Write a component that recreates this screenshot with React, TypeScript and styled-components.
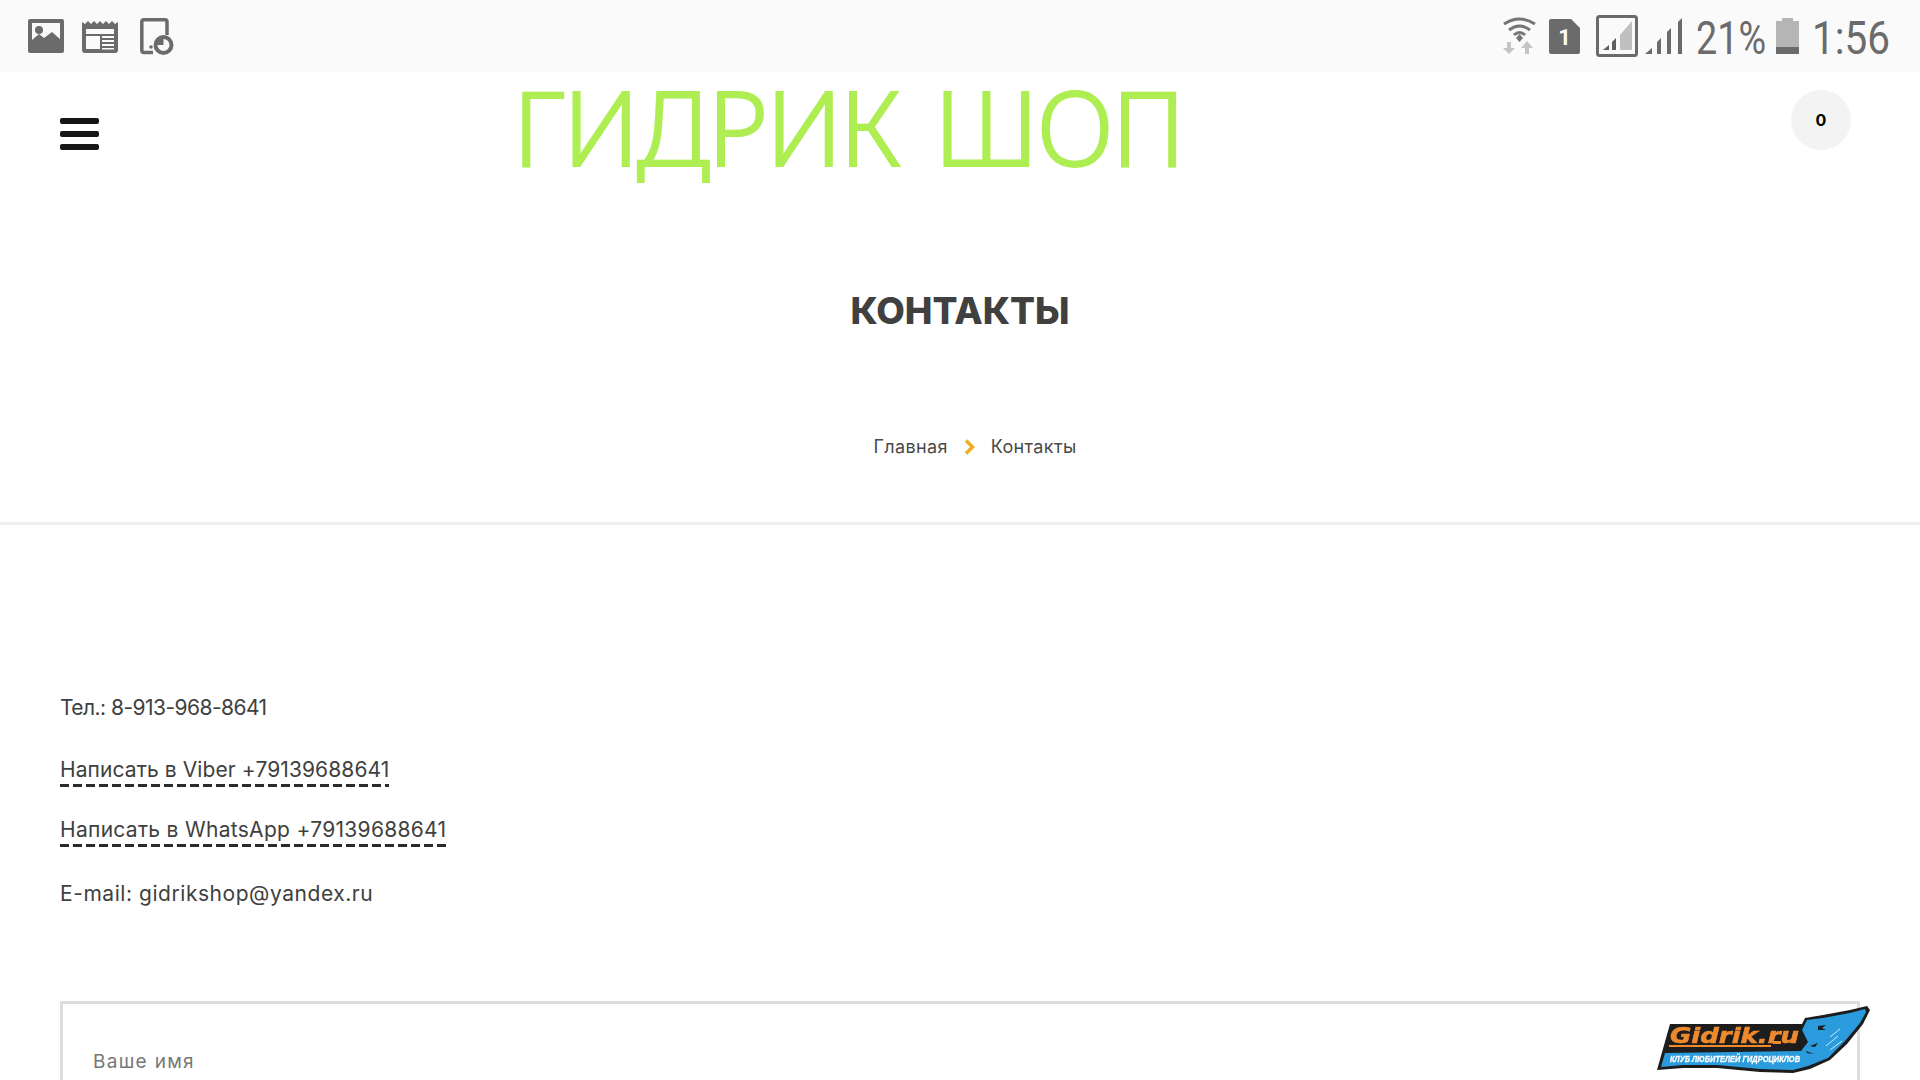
import React from 'react';
import styled, { createGlobalStyle } from 'styled-components';

const GlobalStyle = createGlobalStyle`
  html, body {
    margin: 0;
    padding: 0;
    background: #ffffff;
    overflow: hidden;
  }
  * {
    box-sizing: border-box;
  }
`;

const contacts = [
  { text: 'Тел.: 8-913-968-8641', top: 0, spacing: -0.55 },
  { text: 'Написать в Viber +79139688641', top: 32, spacing: 0.1, link: true },
  { text: 'Написать в WhatsApp +79139688641', top: 30, spacing: 0.3, link: true },
  { text: 'E-mail: gidrikshop@yandex.ru', top: 34, spacing: 0.55 }
];

const App: React.FC = () => {
  return (
    <Page>
      <GlobalStyle />
      <StatusBar>
        <StatusGroup>
          <ImageIcon />
          <NewsIcon />
          <TabletIcon />
        </StatusGroup>
        <StatusGroup>
          <WifiIcon />
          <SimIcon />
          <BoxSignalIcon />
          <SignalIcon />
          <BatteryText>21%</BatteryText>
          <BatteryIcon />
          <ClockText>1:56</ClockText>
        </StatusGroup>
      </StatusBar>

      <Header>
        <Burger>
          <BurgerBar />
          <BurgerBar />
          <BurgerBar />
        </Burger>
        <ShopLogo>ГИДРИК ШОП</ShopLogo>
        <CartBadge>0</CartBadge>
      </Header>

      <TitleBlock>
        <PageTitle>КОНТАКТЫ</PageTitle>
        <Breadcrumbs>
          <span>Главная</span>
          <Chevron />
          <span>Контакты</span>
        </Breadcrumbs>
      </TitleBlock>

      <Content>
        <div>
          {contacts.map(item => (
            <ContactRow key={item.text} $top={item.top} $spacing={item.spacing}>
              {item.link ? <ContactLink>{item.text}</ContactLink> : item.text}
            </ContactRow>
          ))}
        </div>
        <FormBox>
          <Placeholder>Ваше имя</Placeholder>
        </FormBox>
      </Content>

      <ClubLogo />
    </Page>
  );
};

export default App;

const ImageIcon = () => (
  <svg width="36" height="34" viewBox="0 0 36 34" style={{ marginLeft: 28 }}>
    <rect x="0" y="0" width="36" height="34" rx="2" fill="#6b6b6b" />
    <rect x="4" y="4" width="28" height="20" fill="#fafafa" />
    <circle cx="11" cy="11" r="4" fill="#6b6b6b" />
    <path d="M4 24 L4 21 L11 15 L16 19 L24 13 L32 20 L32 26 L4 26 Z" fill="#6b6b6b" />
  </svg>
);

const NewsIcon = () => (
  <svg width="36" height="33" viewBox="0 0 36 33" style={{ marginLeft: 18 }}>
    <path d="M0 2 L3 4 L6 1 L9 4 L12 1 L15 4 L18 1 L21 4 L24 1 L27 4 L30 1 L33 4 L36 2 L36 30 Q36 33 33 33 L3 33 Q0 33 0 30 Z" fill="#6b6b6b" />
    <rect x="4" y="9" width="28" height="5" fill="#fafafa" />
    <rect x="4" y="16" width="14" height="13" fill="#fafafa" />
    <rect x="20" y="16" width="12" height="2" fill="#fafafa" />
    <rect x="20" y="20" width="12" height="2" fill="#fafafa" />
    <rect x="20" y="24" width="12" height="2" fill="#fafafa" />
    <rect x="20" y="28" width="12" height="1.5" fill="#fafafa" />
  </svg>
);

const TabletIcon = () => (
  <svg width="34" height="37" viewBox="0 0 34 37" style={{ marginLeft: 22 }}>
    <path d="M13 34.500 H4 Q1.800 34.500 1.800 32 V4 Q1.800 1.800 4 1.800 H25 Q27 1.800 27 4 V17" fill="none" stroke="#6b6b6b" strokeWidth="3.500" />
    <circle cx="11" cy="29" r="1.800" fill="#6b6b6b" />
    <circle cx="23.500" cy="27" r="10" fill="#6b6b6b" />
    <path d="M23.500 27 V21 A6 6 0 1 1 17.500 27 Z" fill="#fafafa" />
  </svg>
);

const WifiIcon = () => (
  <svg width="33" height="38" viewBox="0 0 33 38">
    <path d="M1 7 Q16.500 -3 32 7" fill="none" stroke="#757575" strokeWidth="3" />
    <path d="M6 13 Q16.500 5 27 13" fill="none" stroke="#757575" strokeWidth="3" />
    <path d="M11 18 Q16.500 13 22 18" fill="none" stroke="#757575" strokeWidth="3" />
    <path d="M13 21 L16.500 17 L20 21 L16.500 25 Z" fill="#757575" />
    <path d="M6 37 L0 31 H4 V25 H8 V31 H12 Z" fill="#c4c4c4" />
    <path d="M24 24 L30 31 H26 V37 H22 V31 H18 Z" fill="#c4c4c4" />
  </svg>
);

const SimIcon = () => (
  <svg width="31" height="35" viewBox="0 0 31 35" style={{ marginLeft: 13 }}>
    <path d="M2 0 H22 L31 9 V33 Q31 35 29 35 H2 Q0 35 0 33 V2 Q0 0 2 0 Z" fill="#6b6b6b" />
    <text x="15.500" y="26" textAnchor="middle" fontFamily="Roboto, sans-serif" fontWeight="700" fontSize="22" fill="#fafafa">1</text>
  </svg>
);

const BoxSignalIcon = () => (
  <svg width="42" height="42" viewBox="0 0 42 42" style={{ marginLeft: 16 }}>
    <rect x="1.500" y="1.500" width="39" height="39" rx="2" fill="none" stroke="#6b6b6b" strokeWidth="3" />
    <path d="M7 35 L13 30 V35 Z" fill="#5f5f5f" />
    <path d="M16 35 V27 L20 23 V35 Z" fill="#5f5f5f" />
    <path d="M24 35 V20 L36 6 V35 Z" fill="#c0c0c0" />
  </svg>
);

const SignalIcon = () => (
  <svg width="37" height="36" viewBox="0 0 37 36" style={{ marginLeft: 7 }}>
    <path d="M0 36 L7 30 V36 Z" fill="#6b6b6b" />
    <path d="M12 36 V24 L16 20 V36 Z" fill="#6b6b6b" />
    <path d="M22 36 V14 L26 10 V36 Z" fill="#6b6b6b" />
    <path d="M33 36 V4 L37 0 V36 Z" fill="#6b6b6b" />
  </svg>
);

const BatteryIcon = () => (
  <svg width="23" height="36" viewBox="0 0 23 36" style={{ marginLeft: 10 }}>
    <path d="M6 0 H17 V3 H23 V29 H0 V3 H6 Z" fill="#b5b5b5" />
    <rect x="0" y="29" width="23" height="7" fill="#6b6b6b" />
  </svg>
);

const Chevron = () => (
  <svg width="11" height="16" viewBox="0 0 11 16">
    <path d="M2 1.500 L8.500 8 L2 14.500" fill="none" stroke="#f0ac1e" strokeWidth="3.500" />
  </svg>
);

const ClubLogo = () => (
  <ClubLogoSvg width="230" height="80" viewBox="0 0 230 80">
    <path
      d="M7 70 L20 24 L152 24 L155 18 L173 15 L200 10 L217 6 L220 10 L213 24 L197 44 L180 60 L160 69 L143 73 L110 72 L67 68 L33 68 Z"
      fill="#1d1d1d"
    />
    <path
      d="M11 67 L15 53 L151 51 L158 42 L152 30 L157 20 L173 18 L200 13 L215 9 L216 12 L210 23 L195 41 L178 58 L158 66 L143 70 L110 69 L67 65 L33 65 Z"
      fill="#2a9bdc"
    />
    <path d="M168 26 L176 25 L172 28 L176 30 L168 30 Z" fill="#1d1d1d" />
    <path d="M160 46 L168 43 L165 47 Z M156 51 L164 54 L157 53 Z" fill="#1d1d1d" />
    <path d="M180 37 L190 29 M176 46 L188 36 M180 50 L192 41" stroke="#cfe9f7" strokeWidth="1" />
    <LogoBrand x="20" y="43" textLength="129" lengthAdjust="spacingAndGlyphs">Gidrik.ru</LogoBrand>
    <LogoBar x="19" y="45" width="102" height="2" />
    <LogoBar x="123" y="41" width="8" height="3" />
    <LogoCaption x="20" y="62" textLength="130" lengthAdjust="spacingAndGlyphs">КЛУБ ЛЮБИТЕЛЕЙ ГИДРОЦИКЛОВ</LogoCaption>
  </ClubLogoSvg>
);

const Page = styled.div`
  position: relative;
  width: 1920px;
  height: 1080px;
  overflow: hidden;
  background: #ffffff;
  font-family: Inter, "Noto Sans", sans-serif;
  color: #404040;
`;

const StatusBar = styled.div`
  display: flex;
  justify-content: space-between;
  align-items: center;
  height: 72px;
  padding-right: 35px;
  background: #fafafa;
`;

const StatusGroup = styled.div`
  display: flex;
  align-items: center;
`;

const BatteryText = styled.span`
  display: inline-block;
  width: 70px;
  margin: 3px 0 0 14px;
  font-family: Roboto, sans-serif;
  font-size: 46px;
  line-height: 46px;
  color: #6b6b6b;
  white-space: nowrap;
  transform: scaleX(0.82);
  transform-origin: left center;
`;

const ClockText = styled(BatteryText)`
  width: 73px;
  margin-left: 13px;
  transform: scaleX(0.88);
`;

const Header = styled.header`
  display: flex;
  align-items: flex-start;
  height: 148px;
  padding: 46px 69px 0 60px;
`;

const Burger = styled.div`
  display: flex;
  flex-direction: column;
  gap: 7px;
  width: 39px;
`;

const BurgerBar = styled.span`
  display: block;
  height: 6px;
  border-radius: 2px;
  background: #161616;
`;

const ShopLogo = styled.div`
  margin: -57px 0 0 414px;
  width: 670px;
  font-family: "Noto Sans", sans-serif;
  font-weight: 300;
  font-size: 103px;
  line-height: 130px;
  letter-spacing: -2.1px;
  word-spacing: 11px;
  color: #aeee52;
  -webkit-text-stroke: 2px #aeee52;
  white-space: nowrap;
`;

const CartBadge = styled.div`
  display: flex;
  align-items: center;
  justify-content: center;
  width: 60px;
  height: 60px;
  margin: -28px 0 0 auto;
  border-radius: 50%;
  background: #f3f3f3;
  font-weight: 700;
  font-size: 16px;
  color: #000000;
`;

const TitleBlock = styled.section`
  display: flex;
  flex-direction: column;
  align-items: center;
  height: 305px;
  padding-top: 68px;
  border-bottom: 3px solid #eeeeee;
`;

const PageTitle = styled.h1`
  margin: 0;
  font-size: 37px;
  line-height: 46px;
  font-weight: 800;
  color: #404040;
`;

const Breadcrumbs = styled.div`
  display: flex;
  align-items: center;
  gap: 16px;
  margin: 101px 0 0 30px;
  font-size: 18px;
  line-height: 24px;
  letter-spacing: 0.35px;
  color: #4a4a4a;
`;

const Content = styled.main`
  padding: 168px 60px 0;
`;

const ContactRow = styled.div<{ $top: number; $spacing: number }>`
  height: 30px;
  margin-top: ${props => props.$top}px;
  font-size: 21px;
  line-height: 30px;
  letter-spacing: ${props => props.$spacing}px;
  color: #404040;
`;

const ContactLink = styled.span`
  display: inline-block;
  height: 32px;
  background: linear-gradient(to right, #2b2b2b 9px, transparent 9px) repeat-x left bottom / 13px 3px;
`;

const FormBox = styled.div`
  height: 300px;
  margin-top: 92px;
  padding: 46px 30px;
  border: 3px solid #dddddd;
`;

const Placeholder = styled.div`
  font-size: 19px;
  line-height: 24px;
  letter-spacing: 1.3px;
  color: #777777;
`;

const ClubLogoSvg = styled.svg`
  position: fixed;
  right: 40px;
  bottom: 0;
`;

const LogoBrand = styled.text`
  font-family: "DejaVu Sans", sans-serif;
  font-style: italic;
  font-weight: 700;
  font-size: 22px;
  fill: #ee8a2e;
  stroke: #ee8a2e;
  stroke-width: 0.6px;
`;

const LogoBar = styled.rect`
  fill: #ee8a2e;
`;

const LogoCaption = styled.text`
  font-family: "Liberation Sans", sans-serif;
  font-style: italic;
  font-weight: 700;
  font-size: 9px;
  fill: #ffffff;
  stroke: #ffffff;
  stroke-width: 0.3px;
`;
